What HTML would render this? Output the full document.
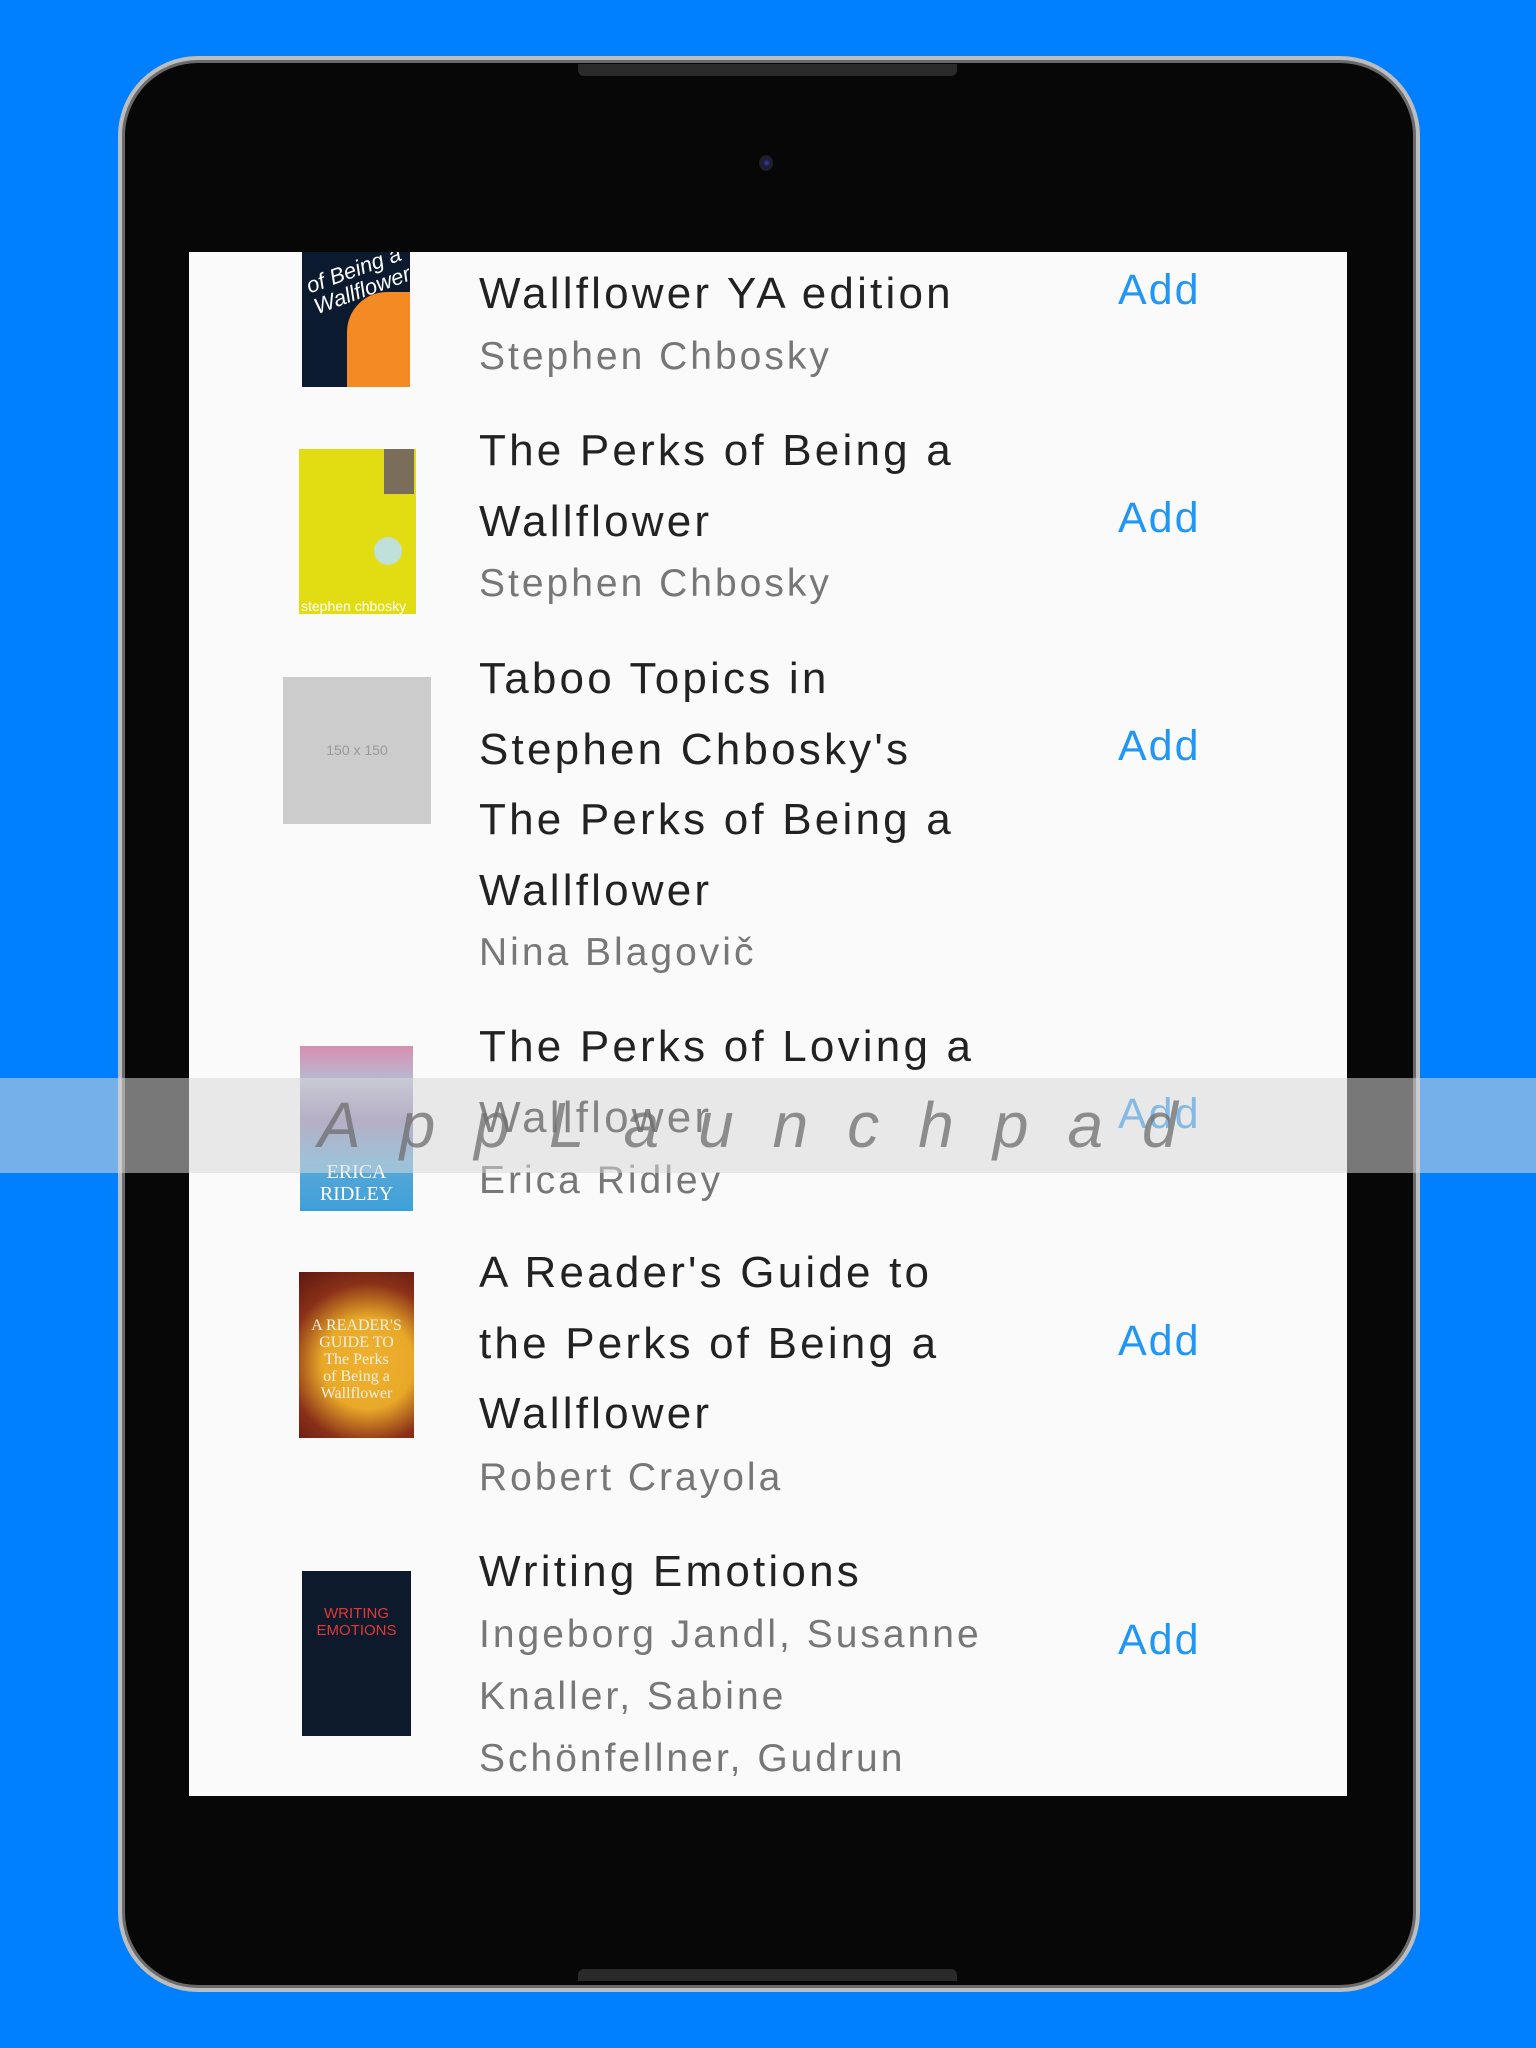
<!DOCTYPE html>
<html><head><meta charset="utf-8">
<style>
html,body{margin:0;padding:0}
body{width:1536px;height:2048px;background:#0080ff;position:relative;overflow:hidden;font-family:"Liberation Sans",sans-serif}
.dev{position:absolute;left:118px;top:56px;width:1302px;height:1936px;border-radius:80px;background:#bdbdbd;}
.dev2{position:absolute;left:4px;top:4px;right:4px;bottom:4px;border-radius:76px;background:#6a6a6a}
.dev3{position:absolute;left:3px;top:3px;right:3px;bottom:3px;border-radius:73px;background:#070707}
.notch{position:absolute;left:578px;width:379px;height:12px;background:#2a2a2a}
.cam{position:absolute;left:759px;top:155px;width:14px;height:16px;border-radius:50%;background:radial-gradient(circle at 55% 50%,#3b3fa0 0,#1a1a40 35%,#222 60%,#111 100%)}
.screen{position:absolute;left:189px;top:252px;width:1158px;height:1544px;background:#fafafa;overflow:hidden}
.t{position:absolute;left:290px;font-size:44px;line-height:70.5px;color:#222;white-space:nowrap;letter-spacing:3.2px}
.a{position:absolute;left:290px;font-size:39px;line-height:62px;color:#777;white-space:nowrap;letter-spacing:3px}
.add{position:absolute;left:929px;font-size:43px;line-height:50px;color:#2196f3;letter-spacing:2px}
.cv{position:absolute;overflow:hidden}
.band{position:absolute;left:0;top:1078px;width:1536px;height:95px;background:rgba(216,216,216,0.54)}
.bandtxt{position:absolute;left:318px;top:1078px;font-size:64px;line-height:95px;font-style:italic;color:rgba(110,110,110,0.75);letter-spacing:39px;white-space:nowrap}
</style></head><body>
<div class="dev"><div class="dev2"><div class="dev3"></div></div></div>
<div class="notch" style="top:64px;border-radius:0 0 6px 6px"></div>
<div class="notch" style="top:1969px;border-radius:6px 6px 0 0"></div>
<div class="cam"></div>
<div class="screen">
  <div class="cv" style="left:113px;top:0;width:108px;height:135px;background:#0c1a30">
    <div style="position:absolute;left:45px;top:40px;width:70px;height:100px;background:#f48a24;border-radius:40px 0 0 0"></div>
    <div style="position:absolute;left:6px;top:6px;color:#fff;font-style:italic;font-size:22px;line-height:22px;transform:rotate(-20deg)">of Being a<br>Wallflower</div>
  </div>
  <div class="cv" style="left:110px;top:197px;width:117px;height:165px;background:#e2dc12">
    <div style="position:absolute;right:2px;top:0;width:30px;height:45px;background:#7a6e5a"></div>
    <div style="position:absolute;left:75px;top:88px;width:28px;height:28px;border-radius:50%;background:#bfe0d8"></div>
    <div style="position:absolute;left:2px;bottom:0;color:#fff;font-size:14px">stephen chbosky</div>
  </div>
  <div class="cv" style="left:94px;top:425px;width:148px;height:147px;background:#ccc;color:#999;font-size:14px;line-height:147px;text-align:center">150 x 150</div>
  <div class="cv" style="left:111px;top:794px;width:113px;height:165px;background:linear-gradient(#d98fb0 0,#b8b8d0 20%,#8c7fb0 45%,#5aa8d8 70%,#3ea0d8 100%)">
    <div style="position:absolute;left:0;right:0;top:115px;color:#fff;font-family:'Liberation Serif',serif;font-size:20px;line-height:22px;text-align:center">ERICA<br>RIDLEY</div>
  </div>
  <div class="cv" style="left:110px;top:1020px;width:115px;height:166px;background:radial-gradient(circle at 60% 55%,#f0b030 0,#e8a828 40%,#8a3018 70%,#5a1810 100%)">
    <div style="position:absolute;left:0;right:0;top:45px;color:#f4f0e0;font-family:'Liberation Serif',serif;font-size:16px;line-height:17px;text-align:center">A READER'S<br>GUIDE TO<br>The Perks<br>of Being a<br>Wallflower</div>
  </div>
  <div class="cv" style="left:113px;top:1319px;width:109px;height:165px;background:#0c1a2c">
    <div style="position:absolute;left:0;right:0;top:34px;color:#e03838;font-size:15px;line-height:17px;text-align:center">WRITING<br>EMOTIONS</div>
  </div>

  <div class="t" style="top:7px">Wallflower YA edition</div>
  <div class="a" style="top:74px">Stephen Chbosky</div>
  <div class="add" style="top:13px">Add</div>

  <div class="t" style="top:164px">The Perks of Being a<br>Wallflower</div>
  <div class="a" style="top:301px">Stephen Chbosky</div>
  <div class="add" style="top:241px">Add</div>

  <div class="t" style="top:392px">Taboo Topics in<br>Stephen Chbosky's<br>The Perks of Being a<br>Wallflower</div>
  <div class="a" style="top:670px">Nina Blagovič</div>
  <div class="add" style="top:469px">Add</div>

  <div class="t" style="top:760px">The Perks of Loving a<br>Wallflower</div>
  <div class="a" style="top:898px">Erica Ridley</div>
  <div class="add" style="top:837px">Add</div>

  <div class="t" style="top:986px">A Reader's Guide to<br>the Perks of Being a<br>Wallflower</div>
  <div class="a" style="top:1195px">Robert Crayola</div>
  <div class="add" style="top:1064px">Add</div>

  <div class="t" style="top:1285px">Writing Emotions</div>
  <div class="a" style="top:1352px">Ingeborg Jandl, Susanne<br>Knaller, Sabine<br>Schönfellner, Gudrun</div>
  <div class="add" style="top:1363px">Add</div>
</div>
<div class="band"></div>
<div class="bandtxt">AppLaunchpad</div>
</body></html>
